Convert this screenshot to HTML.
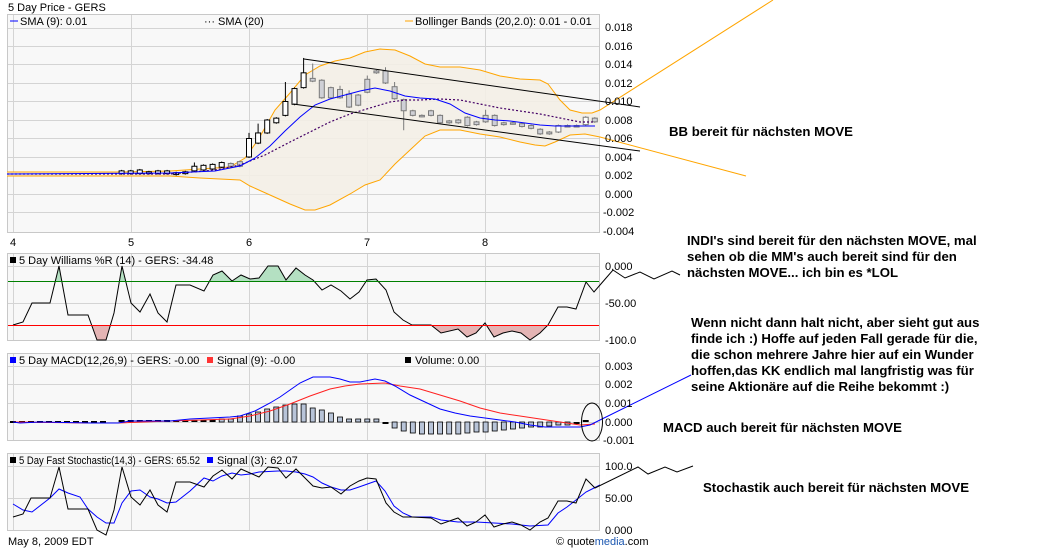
<!DOCTYPE html>
<html><head><meta charset="utf-8">
<style>
html,body{margin:0;padding:0;background:#fff;width:1040px;height:550px;overflow:hidden}
svg{display:block;font-family:"Liberation Sans",Arial,sans-serif}
.lbl{font-size:11px;fill:#000}
.ann{font-family:"Liberation Sans",Arial,sans-serif;font-weight:bold;font-size:13.2px;fill:#000}
</style></head><body>
<svg id="s" width="1040" height="550" viewBox="0 0 1040 550" xmlns="http://www.w3.org/2000/svg">
<defs>
<clipPath id="cg"><rect x="7" y="253" width="593" height="28"/></clipPath>
<clipPath id="cr"><rect x="7" y="325" width="593" height="16"/></clipPath>
</defs>
<text x="8" y="11" class="lbl">5 Day Price - GERS</text>
<rect x="7.5" y="14.5" width="592" height="218" fill="#f8f8f8" stroke="#c8c8c8"/>
<g stroke="#d4d4d4" stroke-width="1">
<line x1="8" y1="28.5" x2="599" y2="28.5"/><line x1="8" y1="46.5" x2="599" y2="46.5"/><line x1="8" y1="64.5" x2="599" y2="64.5"/><line x1="8" y1="83.5" x2="599" y2="83.5"/><line x1="8" y1="101.5" x2="599" y2="101.5"/><line x1="8" y1="120.5" x2="599" y2="120.5"/><line x1="8" y1="138.5" x2="599" y2="138.5"/><line x1="8" y1="157.5" x2="599" y2="157.5"/><line x1="8" y1="175.5" x2="599" y2="175.5"/><line x1="8" y1="194.5" x2="599" y2="194.5"/><line x1="8" y1="212.5" x2="599" y2="212.5"/>
<line x1="13.5" y1="15" x2="13.5" y2="232"/><line x1="131.5" y1="15" x2="131.5" y2="232"/><line x1="249.5" y1="15" x2="249.5" y2="232"/><line x1="367.5" y1="15" x2="367.5" y2="232"/><line x1="485.5" y1="15" x2="485.5" y2="232"/>
</g>
<line x1="10" y1="21" x2="18" y2="21" stroke="#0000ff"/><text x="20" y="25" class="lbl">SMA (9): 0.01</text>
<text x="204" y="25" class="lbl" fill="#440066">···</text><text x="218" y="25" class="lbl">SMA (20)</text>
<line x1="405" y1="21" x2="413" y2="21" stroke="#ffa500"/><text x="415" y="25" class="lbl">Bollinger Bands (20,2.0): 0.01 - 0.01</text>
<polygon fill="#f3eee6" fill-opacity="0.9" points="7,172 120,172 170,171 230,167 245,158 258,140 275,110 290,93 305,75 320,66 335,61 350,58 365,52 380,49 395,50 410,56 425,64 440,67 460,67 480,70 500,76 520,79 540,80 548,84 560,100 570,110 582,113 592,113 600,110 600,137 585,134 570,135 555,142 545,146 535,145 520,142 500,137 480,134 460,130 440,130 425,136 410,150 395,164 380,180 365,185 350,194 330,205 315,210 305,210 290,204 270,195 250,186 240,180 200,178 170,176 7,176"/>
<polyline fill="none" stroke="#ffa500" points="7,172 120,172 170,171 230,167 245,158 258,140 275,110 290,93 305,75 320,66 335,61 350,58 365,52 380,49 395,50 410,56 425,64 440,67 460,67 480,70 500,76 520,79 540,80 548,84 560,100 570,110 582,113 592,113 600,110 773,0"/>
<polyline fill="none" stroke="#ffa500" points="7,176 170,176 200,178 240,180 250,186 270,195 290,204 305,210 315,210 330,205 350,194 365,185 380,180 395,164 410,150 425,136 440,130 460,130 480,134 500,137 520,142 535,145 545,146 555,142 570,135 585,134 600,137 746,176"/>
<g id="candles"></g>
<polyline fill="none" stroke="#440066" stroke-dasharray="2,2" stroke-width="1.2" points="7,174 170,174 215,170 240,165 265,155 290,142 310,132 330,122 350,114 370,108 390,102 405,100 420,100 440,99 460,100 480,104 500,108 520,111 540,114 560,118 580,122 595,122"/>
<polyline fill="none" stroke="#0000ff" points="7,174 170,173 215,171 240,166 255,158 270,146 285,131 300,117 315,105 330,99 345,95 360,91 375,88 390,91 405,96 420,98 435,99 450,104 465,113 480,118 495,120 510,121 525,123 540,125 555,126 595,126"/>
<line x1="304" y1="59" x2="640" y2="107" stroke="#000"/>
<line x1="293" y1="104" x2="640" y2="151" stroke="#000"/>
<g class="lbl">
<text x="605" y="31">0.018</text><text x="605" y="50">0.016</text><text x="605" y="68">0.014</text><text x="605" y="87">0.012</text><text x="605" y="105">0.010</text><text x="605" y="124">0.008</text><text x="605" y="142">0.006</text><text x="605" y="161">0.004</text><text x="605" y="179">0.002</text><text x="605" y="198">0.000</text><text x="603" y="216">-0.002</text><text x="603" y="235">-0.004</text>
<text x="10" y="246">4</text><text x="128" y="246">5</text><text x="246" y="246">6</text><text x="364" y="246">7</text><text x="482" y="246">8</text>
</g>
<rect x="7.5" y="253.5" width="592" height="87" fill="#f8f8f8" stroke="#c8c8c8"/>
<g stroke="#d4d4d4"><line x1="8" y1="266.5" x2="599" y2="266.5"/><line x1="8" y1="303.5" x2="599" y2="303.5"/>
<line x1="13.5" y1="254" x2="13.5" y2="340"/><line x1="131.5" y1="254" x2="131.5" y2="340"/><line x1="249.5" y1="254" x2="249.5" y2="340"/><line x1="367.5" y1="254" x2="367.5" y2="340"/><line x1="485.5" y1="254" x2="485.5" y2="340"/></g>
<rect x="10" y="257" width="6" height="6" fill="#000"/><text x="19" y="264" class="lbl">5 Day Williams %R (14) - GERS: -34.48</text>
<g id="wr"></g>
<line x1="8" y1="281.5" x2="599" y2="281.5" stroke="#008000"/>
<line x1="8" y1="325.5" x2="599" y2="325.5" stroke="#ff0000"/>
<g class="lbl"><text x="605" y="270">0.000</text><text x="605" y="307">-50.00</text><text x="605" y="344">-100.0</text></g>
<rect x="7.5" y="353.5" width="592" height="87" fill="#f8f8f8" stroke="#c8c8c8"/>
<g stroke="#d4d4d4"><line x1="8" y1="366.5" x2="599" y2="366.5"/><line x1="8" y1="384.5" x2="599" y2="384.5"/><line x1="8" y1="403.5" x2="599" y2="403.5"/><line x1="8" y1="422.5" x2="599" y2="422.5"/>
<line x1="13.5" y1="354" x2="13.5" y2="440"/><line x1="131.5" y1="354" x2="131.5" y2="440"/><line x1="249.5" y1="354" x2="249.5" y2="440"/><line x1="367.5" y1="354" x2="367.5" y2="440"/><line x1="485.5" y1="354" x2="485.5" y2="440"/></g>
<rect x="10" y="357" width="6" height="6" fill="#0000ff"/><text x="19" y="364" class="lbl">5 Day MACD(12,26,9) - GERS: -0.00</text>
<rect x="207" y="357" width="6" height="6" fill="#ff3333"/><text x="217" y="364" class="lbl">Signal (9): -0.00</text>
<rect x="405" y="357" width="6" height="6" fill="#000"/><text x="415" y="364" class="lbl">Volume: 0.00</text>
<g id="bars"></g>
<polyline fill="none" stroke="#ff2020" points="13,422 90,423 118,423 170,421 230,419 250,416 270,411 290,404 310,396 330,389 345,386 360,384 385,383 400,386 420,389 440,395 460,401 480,408 500,413 520,416 540,419 560,422 580,425 595,424"/>
<polyline fill="none" stroke="#0000ff" points="13,422 20,423 40,422 90,423 118,423 130,421 170,421 190,419 210,418 230,417 240,416 255,411 270,403 280,397 290,390 300,383 313,377 330,377 340,379 350,382 360,382 375,379 385,381 395,386 410,395 425,402 440,409 455,413 470,416 485,418 500,420 515,422 530,425 545,427 580,427 590,425 600,420 691,375"/>
<ellipse cx="592" cy="422" rx="10.5" ry="19" fill="none" stroke="#000"/>
<g class="lbl"><text x="605" y="370">0.003</text><text x="605" y="388">0.002</text><text x="605" y="407">0.001</text><text x="605" y="426">0.000</text><text x="603" y="444">-0.001</text></g>
<rect x="7.5" y="453.5" width="592" height="77" fill="#f8f8f8" stroke="#c8c8c8"/>
<g stroke="#d4d4d4"><line x1="8" y1="466.5" x2="599" y2="466.5"/><line x1="8" y1="498.5" x2="599" y2="498.5"/>
<line x1="13.5" y1="454" x2="13.5" y2="530"/><line x1="131.5" y1="454" x2="131.5" y2="530"/><line x1="249.5" y1="454" x2="249.5" y2="530"/><line x1="367.5" y1="454" x2="367.5" y2="530"/><line x1="485.5" y1="454" x2="485.5" y2="530"/></g>
<rect x="10" y="457" width="6" height="6" fill="#000"/><text x="19" y="464" class="lbl" textLength="181" lengthAdjust="spacingAndGlyphs">5 Day  Fast Stochastic(14,3) - GERS: 65.52</text>
<rect x="207" y="457" width="6" height="6" fill="#0000ff"/><text x="217" y="464" class="lbl">Signal (3): 62.07</text>
<polyline fill="none" stroke="#0000ff" points="13,504 23,510 32,512 50,498 59,489 68,493 80,497 88,509 97,517 106,523 114,523 122,503 131,491 140,490 150,497 158,499 167,503 176,502 190,491 204,478 213,481 222,476 232,473 241,475 250,474 259,472 278,471 286,471 296,472 305,474 313,477 322,483 331,487 341,490 350,490 359,487 376,481 385,491 394,506 403,513 412,517 431,517 441,520 458,522 476,522 494,523 512,524 530,526 548,525 558,513 567,507 576,500 586,492 594,488 600,485"/>
<polyline fill="none" stroke="#000" points="13,517 23,514 31,498 50,498 59,467 68,509 88,509 97,530 106,535 114,510 122,467 131,497 140,505 150,490 158,505 167,512 176,482 190,482 204,487 213,476 222,470 232,479 241,469 250,473 259,477 268,467 278,468 286,478 296,469 305,478 313,486 322,488 331,487 341,494 350,486 359,481 367,478 376,479 386,503 394,512 403,517 412,517 431,518 441,524 458,518 467,526 476,522 485,515 494,527 503,524 512,522 521,525 530,530 540,522 548,518 558,501 567,501 576,503 586,479 595,488 638,467 648,474 665,467 677,472 693,466"/>
<g class="lbl"><text x="605" y="470">100.0</text><text x="605" y="502">50.00</text><text x="605" y="534">0.000</text></g>
<text x="8" y="545" class="lbl">May 8, 2009 EDT</text>
<text x="556" y="545" class="lbl">© quote<tspan fill="#1a56b0">media</tspan>.com</text>
<text x="669" y="136" class="ann">BB bereit für nächsten MOVE</text>
<text class="ann"><tspan x="687" y="245">INDI's sind bereit für den nächsten MOVE, mal</tspan><tspan x="687" y="261">sehen ob die MM's auch bereit sind für den</tspan><tspan x="687" y="277">nächsten MOVE... ich bin es *LOL</tspan></text>
<text class="ann"><tspan x="691" y="327">Wenn nicht dann halt nicht, aber sieht gut aus</tspan><tspan x="691" y="343">finde ich :) Hoffe auf jeden Fall gerade für die,</tspan><tspan x="691" y="359">die schon mehrere Jahre hier auf ein Wunder</tspan><tspan x="691" y="375">hoffen,das KK endlich mal langfristig was für</tspan><tspan x="691" y="391">seine Aktionäre auf die Reihe bekommt :)</tspan></text>
<text x="663" y="432" class="ann">MACD auch bereit für nächsten MOVE</text>
<text x="703" y="492" class="ann">Stochastik auch bereit für nächsten MOVE</text>
</svg>
<script>
(function(){
var NS="http://www.w3.org/2000/svg";
function Y(v){return 194-v*9250;}
function el(p,t,a){var e=document.createElementNS(NS,t);for(var k in a)e.setAttribute(k,a[k]);p.appendChild(e);return e;}
var c=[[.0022,.0025,0,0,1],[.0022,.0025,0,0,1],[.0022,.0026,0,0,1],[.0022,.0024,0,0,1],[.0022,.0025,0,0,1],[.0022,.0025,0,0,1],[.0021,.0023,0,0,1],[.0022,.0024,0,0,1],[.0025,.0030,.0033,0,1],[.0026,.0031,0,0,1],[.0027,.0032,0,0,1],[.0029,.0034,0,0,1],[.0030,.0033,0,0,0],[.0030,.0035,0,0,0],
[.0040,.0060,.0065,0,1],[.0055,.0066,.0075,0,1],[.0066,.0080,0,0,1],[.0077,.0082,0,0,1],[.0085,.0100,.0120,0,1],[.0097,.0114,0,0,1],[.0115,.0131,.0146,0,1],[.0122,.0125,.0140,0,0],[.0104,.0123,0,0,0],[.0104,.0115,0,0,0],[.0104,.0113,.0116,0,0],[.0094,.0108,.0111,0,0],[.0096,.0107,0,0,0],[.0110,.0124,.0127,0,0],[.0131,.0133,0,0,0],[.0120,.0133,.0136,0,0],[.0103,.0116,.0120,0,0],[.0090,.0102,0,.0070,0],[.0085,.0090,0,0,0],[.0084,.0085,0,0,0],[.0085,.0090,0,0,0],[.0077,.0085,0,0,0],[.0077,.0079,0,0,0],[.0077,.0080,0,0,0],[.0074,.0083,0,0,0],[.0075,.0078,0,0,0],[.0078,.0085,.0090,0,0],[.0074,.0085,0,0,0],[.0075,.0077,0,0,0],[.0076,.0077,0,0,0],[.0073,.0076,0,0,0],[.0071,.0074,0,0,0],[.0065,.0070,0,0,0],[.0065,.0067,0,0,0],[.0067,.0074,0,0,1],[.0073,.0074,0,0,0],[.0073,.0074,0,0,0],[.0075,.0083,0,0,1],[.0078,.0082,0,0,0]];
var g=document.getElementById('candles');
for(var i=0;i<c.length;i++){var x=121.6+9.1*i,d=c[i];var dark=i<21&&d[4];var sc=dark?'#000':'#7a7a7a';
 var hi=Math.max(d[1],d[2]||0),lo=d[3]?d[3]:d[0];
 el(g,'line',{x1:x,x2:x,y1:Y(hi)-1,y2:Y(lo)+1,stroke:sc});
 var h=Math.max(1.5,Y(d[0])-Y(d[1]));
 el(g,'rect',{x:x-2.5,y:Y(d[1]),width:5,height:h,fill:d[4]?'#fff':'#cfd0d6',stroke:sc});}
var wp="13,325 23,322 32,303 50,303 59,266 68,315 88,315 97,340 106,340 114,313 122,266 131,303 140,312 150,294 158,313 167,322 176,285 190,285 204,291 213,275 222,271 232,281 241,275 250,279 259,278 268,266 278,266 286,280 296,268 305,275 313,280 322,290 331,285 341,291 350,299 359,292 367,280 376,279 386,290 394,312 403,320 412,325 431,325 441,333 458,329 467,337 476,333 485,323 494,337 503,333 512,331 521,333 530,340 540,333 548,325 558,307 567,307 576,309 586,282 594,292 600,285";
var w=document.getElementById('wr');
el(w,'polygon',{points:wp+" 600,281 13,281",fill:'#a8dcb8','fill-opacity':'0.85','clip-path':'url(#cg)'});
el(w,'polygon',{points:wp+" 600,325 13,325",fill:'#e0a8a8','fill-opacity':'0.85','clip-path':'url(#cr)'});
el(w,'polyline',{points:wp+" 613,270 625,278 640,272 654,279 672,271 680,275",fill:'none',stroke:'#000'});
var b=[1,1,1,1,1,1,1,1,2,2,2,2,3,3,6,8,10,13,15,17,18,18,14,12,9,5,3,3,3,3,-1,-6,-9,-11,-12,-12,-12,-12,-12,-11,-10,-10,-9,-8,-7,-6,-5,-5,-4,-3,-3,-1,1];
var bg=document.getElementById('bars');
for(var j=1;j<b.length;j++){var x=121.6+9.1*j-9.1,v=b[j];
 if(Math.abs(v)<=2){el(bg,'rect',{x:x-3,y:v>0?420:422,width:6,height:2,fill:'#000'});}
 else{el(bg,'rect',{x:x-2.5,y:v>0?422-v:422,width:5,height:Math.abs(v),fill:'#b8c4d8',stroke:'#000','stroke-width':0.8});}}
for(var k=0;k<11;k++){el(bg,'rect',{x:13+k*9-3,y:421,width:6,height:2,fill:'#000'});}
})();
</script>
</body></html>
